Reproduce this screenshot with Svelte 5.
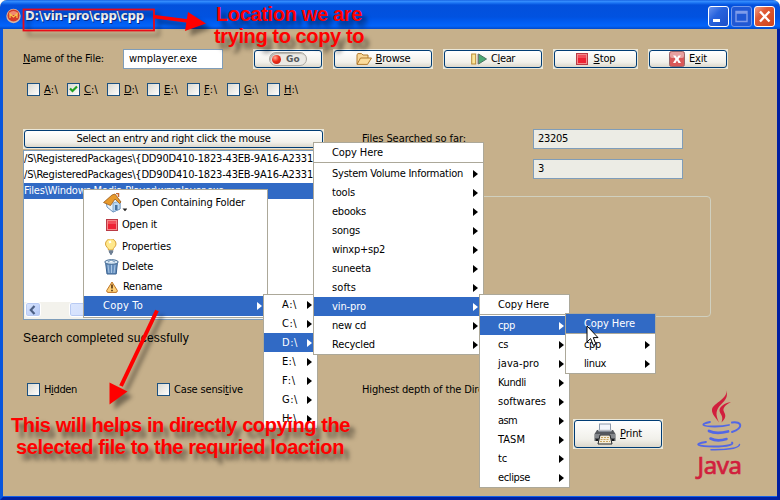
<script>
  const drives = ['A', 'C', 'D', 'E', 'F', 'G', 'H'];
  const results = [
    '/S\\RegisteredPackages\\{DD90D410-1823-43EB-9A16-A2331',
    '/S\\RegisteredPackages\\{DD90D410-1823-43EB-9A16-A2331',
    'Files\\Windows Media Player\\wmplayer.exe'
  ];
  const driveItems = [['A:\\', 15], ['C:\\', 15], ['D:\\', 16], ['E:\\', 14], ['F:\\', 14], ['G:\\', 16], ['H:\\', 15]];
  const dItems = [
    ['System Volume Information', 131], ['tools', 23], ['ebooks', 34], ['songs', 28], ['winxp+sp2', 53],
    ['suneeta', 39], ['softs', 24], ['vin-pro', 34], ['new cd', 34], ['Recycled', 43]
  ];
  const proItems = [
    ['cpp', 17], ['cs', 10], ['java-pro', 41], ['Kundli', 28], ['softwares', 48], ['asm', 19],
    ['TASM', 27], ['tc', 9], ['eclipse', 32]
  ];
  const cppItems = [['cpp', 17], ['linux', 22]];

  // Spreads the letters so that a label takes the given width.
  function fit(node, width) {
    const natural = node.getBoundingClientRect().width;
    const count = node.textContent.length;
    node.style.letterSpacing = `${(width - natural) / count}px`;
  }
</script>

{#snippet menu(kind, head, items, active, headActive)}
  <div class="menu {kind}">
    {#if head}
      <div class="item head" class:on={headActive}><span class="t" use:fit={51}>Copy Here</span></div>
    {/if}
    {#each items as [name, w], i}
      <div class="item" class:on={i === active}>
        <span class="t" use:fit={w}>{name}</span><i class="arrow"></i>
      </div>
    {/each}
  </div>
{/snippet}

{#snippet redSquare()}
  <svg width="12" height="12" viewBox="0 0 12 12"><rect x=".5" y=".5" width="11" height="11" fill="#f58a8a" stroke="#b93a45" /><rect x="2" y="2" width="8" height="8" fill="#ee2233" /><rect x="2" y="2" width="8" height="3" fill="#f24d58" /></svg>
{/snippet}

<div class="window">
  <header>
    <svg class="appicon" width="15" height="16" viewBox="0 0 15 16"><circle cx="7.5" cy="8" r="7.2" fill="#d9b4a0" /><circle cx="7.5" cy="7.5" r="6" fill="#d33b2a" /><path d="M3 5Q7.5 1 12 5L11 7H4Z" fill="#f08a70" /><path d="M4 10V6l3.5 3L11 6v4" fill="none" stroke="#f9c34d" stroke-width="1.3" /></svg>
    <span class="t title" use:fit={119}>D:\vin-pro\cpp\cpp</span>
    <div class="controls">
      <div class="ctl"><svg width="19" height="19" viewBox="0 0 19 19"><path d="M4 13.5h7" stroke="#fff" stroke-width="3" /></svg></div>
      <div class="ctl dim"><svg width="19" height="19" viewBox="0 0 19 19"><path d="M4 4.5h11v10H4zM4 6h11" fill="none" stroke="#7f9cea" stroke-width="1.4" /></svg></div>
      <div class="ctl close"><svg width="19" height="19" viewBox="0 0 19 19"><path d="M5 4.5l9.5 10M14.500 4.500L5 14.500" stroke="#fff" stroke-width="2.300" /></svg></div>
    </div>
  </header>

  <main>
    <div class="row search">
      <div class="name"><span class="t" use:fit={81}><u>N</u>ame of the File:</span></div>
      <div class="input"><span class="t" use:fit={68}>wmplayer.exe</span></div>
      <button class="go"><span class="pill"><i class="dot"></i><b>Go</b></span></button>
      <button class="wide">
        <svg width="16" height="12" viewBox="0 0 16 12"><path d="M1 11V1.500L2 .600h3.500L7 2h5v3" fill="#f8d89a" stroke="#b27a2c" /><path d="M1 11.400L4.500 5h11l-4 6.400z" fill="#fbdc9c" stroke="#b27a2c" /></svg>
        <span class="t" use:fit={35}><u>B</u>rowse</span>
      </button>
      <button class="wide clear">
        <svg width="16" height="12" viewBox="0 0 16 12"><rect x=".700" y="1" width="4" height="10" fill="#fae69a" stroke="#b98a32" /><path d="M7.500 1v10L15.500 6z" fill="#4aa873" stroke="#4b7462" /><path d="M7 1v10" stroke="#8b7f80" /></svg>
        <span class="t" use:fit={24}>C<u>l</u>ear</span>
      </button>
      <button class="stop">{@render redSquare()}<span class="t" use:fit={22}><u>S</u>top</span></button>
      <button class="exit">
        <svg width="16" height="16" viewBox="0 0 16 16"><rect x=".500" y=".500" width="15" height="15" rx="2" fill="#d95858" stroke="#98676c" /><rect x="1" y="1" width="14" height="6" rx="2" fill="#e8a0a0" /><path d="M4 4.500h2.500L8 6.800l1.500-2.300H12L9.500 8l2.500 4H9.500L8 9.500 6.500 12H4L6.500 8z" fill="#fff" /></svg>
        <span class="t" use:fit={18}>E<u>x</u>it</span>
      </button>
    </div>

    <div class="row drives">
      {#each drives as d}
        <div class="check"><span class="box">{#if d === 'C'}<svg width="11" height="11" viewBox="0 0 11 11"><path d="M2 4.500L4.500 7 9 2.500" fill="none" stroke="#21a121" stroke-width="2.200" /></svg>{/if}</span><span class="t" use:fit={14}><u>{d}</u>:\</span></div>
      {/each}
    </div>

    <div class="middle">
      <section class="results">
        <button class="header"><span class="t" use:fit={194}>Select an entry and right click the mouse</span></button>
        <div class="list">
          {#each results as r, i}
            <div class="entry" class:on={i === 2}><span class="t" use:fit={i < 2 ? 289 : 200}>{r}</span></div>
          {/each}
          <div class="scroll">
            <div class="sbtn"><svg width="14" height="14" viewBox="0 0 14 14"><path d="M8.500 3L4.800 7l3.700 4" fill="none" stroke="#4d6185" stroke-width="2.200" /></svg></div>
            <div class="thumb"></div>
          </div>
        </div>
      </section>
      <section class="stats">
        <div class="stat"><span class="t" use:fit={104}>Files Searched so far:</span><div class="input ro"><span class="t" use:fit={30}>23205</span></div></div>
        <div class="stat"><div class="input ro"><span class="t">3</span></div></div>
        <div class="group"></div>
      </section>
    </div>

    <div class="lower">
      <div class="left">
        <div class="status"><span class="t" use:fit={166}>Search completed sucessfully</span></div>
        <div class="row options">
          <div class="check hidden"><span class="box"></span><span class="t" use:fit={33}>H<u>i</u>dden</span></div>
          <div class="check sens"><span class="box"></span><span class="t" use:fit={69}>Case sensi<u>t</u>ive</span></div>
          <span class="t" use:fit={122}>Highest depth of the Dire</span>
        </div>
        <button class="print">
          <svg width="22" height="22" viewBox="0 0 22 22"><path d="M3 7h16l2.500 4v7H.500v-7z" fill="#55585d" /><rect x="1" y="11" width="20" height="4" fill="#85888c" /><rect x="5.500" y="1" width="11" height="7" fill="#f2f5fb" stroke="#8d9aac" /><path d="M4 7.500h14" stroke="#b7babf" stroke-width="1.500" /><path d="M6 12h10l2 9H4z" fill="#f3ecd8" stroke="#24262a" /><path d="M7 14.500h8M6.500 16.500h9M6 18.500h10" stroke="#c9a560" stroke-width="1" stroke-dasharray="2 1" /><path d="M2 17h2M18 17h2" stroke="#191a1c" stroke-width="2" /></svg>
          <span class="t" use:fit={22}><u>P</u>rint</span>
        </button>
      </div>
      <div class="java">
        <svg width="47" height="62" viewBox="0 0 47 62" fill="none">
          <path d="M29.500.500C34 9 17 14 16 20.500C15.500 25 20 29 23 33.500C19 25 20 20.500 25 15.500C29.500 11 33 7 29.500.500Z" fill="#d11f3d" />
          <path d="M35 13C28 14 23 18 23.500 22C24 25 28 27 25.500 33.500C32 27 28.500 25 27.500 21.500C27 18.500 30 15.500 35 13Z" fill="#d11f3d" />
          <g stroke="#5267e6" stroke-linecap="round" stroke-width="1.800">
            <path d="M14 33C4 35 5 37.500 19 37.500Q27 37.500 33 36" />
            <path d="M36 33.500C46 32 48 39 36 43" stroke-width="2" />
            <path d="M13 42Q20 45.500 32 42.500" stroke-width="2.800" />
            <path d="M14.500 49.500Q21 53 30.500 50" stroke-width="2.600" />
            <path d="M10 53C-4 55 2 57.500 18 57.500C33 57.500 38 55 36 53.500" />
            <path d="M15 60.700C32 61 43 59 43.500 55.500" stroke-width="1.500" />
          </g>
        </svg>
        <span class="t word" use:fit={44}>Java</span>
      </div>
    </div>
  </main>
</div>

<div class="menu context">
  <div class="entry2 folder">
    <svg width="24" height="20" viewBox="0 0 24 20"><path d="M3 8l8-6 6 6v8l-7 3-6-5z" fill="#e8f3fc" stroke="#6c93bd" /><path d="M10 10l7-2v8l-7 3z" fill="#b9d8f3" stroke="#6c93bd" stroke-width=".7" /><path d="M.500 9.500L9 2l3-1 6 8-1.500 1.500L12 6 7.500 12.500z" fill="#e89a2c" stroke="#9b5c1d" stroke-width=".8" /><path d="M13 .500h2.500V4" stroke="#c66831" stroke-width="1.500" fill="none" /><rect x="12" y="12" width="2.500" height="5" fill="#47729f" /><path d="M19.500 15.500h5L22 18.200z" fill="#222" /></svg>
    <span class="t" use:fit={113}>Open Containing Folder</span>
  </div>
  <div class="entry2 openit">{@render redSquare()}<span class="t" use:fit={35}>Open it</span></div>
  <div class="entry2 props">
    <svg width="14" height="16" viewBox="0 0 14 16"><path d="M4.500 11C4.500 8.500 1.500 8 1.500 5a5 5 0 0 1 10.500 0c0 3-3 3.500-3 6z" fill="#ffe88b" stroke="#d9a23a" /><path d="M5 3.500L7 2.500" stroke="#fff" stroke-width="2" /><path d="M4.700 12h4.600M5 13.500h4M6 15h2" stroke="#6e7f94" stroke-width="1.300" /></svg>
    <span class="t" use:fit={49}>Properties</span>
  </div>
  <div class="entry2 del">
    <svg width="15" height="16" viewBox="0 0 15 16"><path d="M1.500 3h12l-1.300 12H3z" fill="#668fbd" stroke="#39618f" /><path d="M4 6l1 8M7.500 6v8M11 6l-1 8" stroke="#a9c6e4" /><ellipse cx="7.500" cy="3" rx="6.700" ry="2.300" fill="#d5e5f3" stroke="#446a92" /><path d="M4 3l3-2 4 2" stroke="#7095b9" fill="#f4f8fb" /></svg>
    <span class="t" use:fit={31}>Delete</span>
  </div>
  <div class="entry2 ren">
    <svg width="12" height="12" viewBox="0 0 12 12"><path d="M6 1L11.300 9.500Q11.500 11.300 10 11.400H2Q.500 11.300.700 9.500Z" fill="#ffd178" stroke="#bd7424" /><path d="M6 3.500v4M6 8.700v1.500" stroke="#55300e" stroke-width="1.600" /></svg>
    <span class="t" use:fit={39}>Rename</span>
  </div>
  <div class="item on"><span class="t" use:fit={40}>Copy To</span><i class="arrow"></i></div>
</div>

{@render menu('m-drives', false, driveItems, 2, false)}
{@render menu('m-d', true, dItems, 7, false)}
{@render menu('m-pro', true, proItems, 0, false)}
{@render menu('m-cpp', true, cppItems, -1, true)}

<svg class="cursor" width="14" height="22" viewBox="0 0 14 22"><path d="M1 1v16l3.600-3.400L7.300 20.300l2.600-1.200L7.300 12.600H12z" fill="#fff" stroke="#000" /></svg>

<svg class="marks" width="780" height="500" viewBox="0 0 780 500">
  <rect x="23.500" y="9.500" width="130.500" height="21" fill="none" stroke="#e80c18" stroke-width="1.800" />
  <path d="M153 16.500L188 21" stroke="#f00" stroke-width="3.500" />
  <path d="M188 12L206 23.500L185 31Z" fill="#f00" />
  <path d="M157 310.500L121 386" stroke="#f00" stroke-width="4" />
  <path d="M109.500 382.500L127.500 391.500L109.500 404.500Z" fill="#f00" />
</svg>
<div class="note top"><span class="t" use:fit={146}>Location we are</span><br /><span class="t" use:fit={150}>trying to copy to</span></div>
<div class="note bottom"><span class="t" use:fit={339}>This will helps in directly copying the</span><br /><span class="t second" use:fit={328}>selected file to the requried loaction</span></div>

<style>
  :global(body) { margin: 0; overflow: hidden; background: #fff; }
  :global(#app) { position: relative; width: 780px; height: 500px; overflow: hidden; font: 11px/14px "DejaVu Sans Condensed", "DejaVu Sans", Tahoma, sans-serif; font-stretch: condensed; color: #000; }
  .t { display: inline-block; white-space: pre; flex: none; }
  u { text-decoration: underline; text-underline-offset: 1px; text-decoration-thickness: 1px; text-decoration-skip-ink: none; }
  .window { box-sizing: border-box; width: 780px; height: 500px; display: flex; flex-direction: column; background: #c6b08b; border-radius: 7px 7px 0 0; overflow: hidden; }
  header { flex: none; height: 29px; box-sizing: border-box; display: flex; align-items: center; padding: 3px 5px 0 6px; background: linear-gradient(#0b52d8 0, #3a92ff 1px, #1a72f2 3px, #0350dc 5px, #0152e0 17px, #005cf2 22px, #0364fa 26px, #0249c8 29px); }
  .appicon { margin-right: 4px; }
  .title { font: bold 13px/18px "DejaVu Sans Condensed", "DejaVu Sans", sans-serif; color: #fff; text-shadow: 1px 1px 0 #0b2b84; }
  .controls { margin-left: auto; display: flex; gap: 2px; }
  .ctl { box-sizing: border-box; width: 21px; height: 21px; border: 1px solid #fff; border-radius: 3px; background: linear-gradient(135deg, #6a93ee, #2863dd 40%, #1d4fc9); }
  .ctl svg { display: block; }
  .ctl.dim { border-color: #7098ec; background: #2058d4; }
  .ctl.close { background: linear-gradient(135deg, #f0a088, #e05a35 35%, #d04419); }
  main { flex: 1; box-sizing: border-box; border-left: 3px solid #0855dd; border-right: 3px solid #001ea0; border-bottom: 3px solid #0021a2; padding: 20px 0 0 20px; display: flex; flex-direction: column; box-shadow: inset 0 -1px #1460e8; }
  .row { display: flex; align-items: center; }
  .search { height: 20px; flex: none; }
  .name { width: 100px; flex: none; }
  .input { box-sizing: border-box; width: 100px; height: 20px; border: 1px solid #7f9db9; background: #fff; padding: 2px 0 0 5px; }
  .search .input { margin-right: 30px; }
  .input.ro { width: 150px; background: #ecece5; }
  button { box-sizing: border-box; flex: none; position: relative; height: 20px; margin: 0 10px 0 0; padding: 0; border: 1px solid #eae7d8; background: #eae7d8; font: inherit; color: #000; display: flex; align-items: center; justify-content: center; gap: 4px; isolation: isolate; }
  button::before { content: ""; position: absolute; inset: 0; z-index: -1; border: 1px solid #003c74; border-radius: 3px; background: linear-gradient(#fff, #f1f0ea 70%, #dcd8cc); }
  .go { width: 70px; }
  .wide { width: 100px; }
  .stop { width: 85px; gap: 6px; }
  .exit { width: 80px; }
  .pill { display: flex; align-items: center; gap: 5px; width: 34px; height: 12px; padding-left: 2px; border: 1px solid #aaa7a0; border-radius: 7px; background: #eae9e4; box-shadow: inset 1px 1px 1px #b8b5ad; }
  .pill b { font: bold 9px/12px "DejaVu Sans", sans-serif; color: #55585a; }
  .dot { width: 9px; height: 9px; border-radius: 50%; background: radial-gradient(circle at 35% 30%, #ffab93, #ee2c18 45%, #b81509); }
  .drives { margin-top: 14px; height: 13px; padding-left: 4px; flex: none; }
  .check { display: flex; align-items: center; gap: 4px; }
  .drives .check { width: 40px; }
  .box { box-sizing: border-box; width: 13px; height: 13px; border: 1px solid #1c5180; background: linear-gradient(135deg, #d9d8d0, #fff); flex: none; }
  .box svg { display: block; }
  .middle { margin-top: 33px; height: 191px; flex: none; display: flex; }
  .results { width: 301px; flex: none; margin-right: 39px; }
  .header { width: 301px; }
  .list { box-sizing: border-box; width: 301px; height: 170px; margin-top: 1px; border: 1px solid #7f9db9; background: #fff; display: flex; flex-direction: column; overflow: hidden; }
  .entry { height: 16px; flex: none; line-height: 16px; }
  .on { background: #316ac5; color: #fff; }
  .scroll { margin-top: auto; height: 16px; background: #f3f2ec; display: flex; padding: 0 0 1px 1px; }
  .sbtn, .thumb { box-sizing: border-box; height: 15px; border: 1px solid #fff; border-radius: 3px; background: linear-gradient(135deg, #dbe6fe, #b3c8f6); box-shadow: inset 0 0 0 1px #b8caf3; }
  .sbtn { width: 16px; margin-right: 28px; }
  .sbtn svg { display: block; }
  .thumb { width: 120px; }
  .stats { width: 348px; display: flex; flex-direction: column; }
  .stat { display: flex; align-items: center; height: 20px; margin-bottom: 10px; width: 320px; }
  .stat .input { margin-left: auto; }
  .group { box-sizing: border-box; height: 121px; margin-top: 7px; border: 1px solid #d0d0bf; border-radius: 4px; }
  .stat .t { margin-left: -1px; }
  .lower { display: flex; flex: 1; }
  .left { width: 671px; display: flex; flex-direction: column; }
  .status { height: 14px; margin-top: 11px; font: 12px/14px "Liberation Sans", Arial, sans-serif; }
  .options { margin-top: 38px; height: 13px; padding-left: 4px; }
  .hidden { width: 130px; }
  .sens { width: 205px; }
  .print { width: 90px; height: 30px; margin: 23px 0 0 550px; }
  .java { display: flex; flex-direction: column; align-items: center; padding-top: 69px; width: 51px; }
  .java svg { flex: none; }
  .word { font: 24px/27px "Noto Sans", sans-serif; color: #d11f3d; -webkit-text-stroke: .7px #d11f3d; }

  .menu { position: absolute; box-sizing: border-box; background: #fff; border: 1px solid #aca899; padding-bottom: 1px; }
  .item { height: 19px; display: flex; align-items: center; justify-content: space-between; padding: 0 5px 0 18px; }
  .head { border-bottom: 1px solid #aca899; margin-bottom: 1px; }
  .arrow { width: 0; height: 0; border: 4.5px solid transparent; border-left: 5px solid currentColor; border-right: 0; }
  .context { left: 83px; top: 189px; width: 185px; height: 129px; display: flex; flex-direction: column; padding-top: 1px; }
  .context .item { height: 20px; padding-left: 19px; margin-top: auto; }
  .entry2 { display: flex; align-items: center; height: 21px; padding-left: 22px; gap: 5px; }
  .folder { height: 24px; padding-left: 19px; }
  .openit { height: 22px; gap: 4px; }
  .props { padding-left: 20px; gap: 4px; }
  .del { padding-left: 20px; gap: 3px; }
  .ren { height: 19px; padding-left: 22px; }
  .m-drives { left: 263px; top: 294px; width: 55px; height: 135px; }
  .m-d { left: 313px; top: 142px; width: 171px; height: 213px; }
  .m-pro { left: 479px; top: 294px; width: 91px; height: 194px; }
  .m-cpp { left: 565px; top: 313px; width: 91px; height: 61px; }
  .cursor { position: absolute; left: 586px; top: 325px; }
  .marks { position: absolute; left: 0; top: 0; filter: drop-shadow(5px 5px 2px rgba(0, 0, 0, .4)); pointer-events: none; }
  .note { position: absolute; color: #f00; font: bold 20px/22px "Liberation Sans", Arial, sans-serif; text-shadow: 5px 6px 4px rgba(0, 0, 0, .5); white-space: nowrap; }
  .top { left: 216px; top: 3px; }
  .top .t:last-child { margin-left: -2px; }
  .bottom { left: 11px; top: 414px; }
  .second { margin-left: 5px; }
</style>
